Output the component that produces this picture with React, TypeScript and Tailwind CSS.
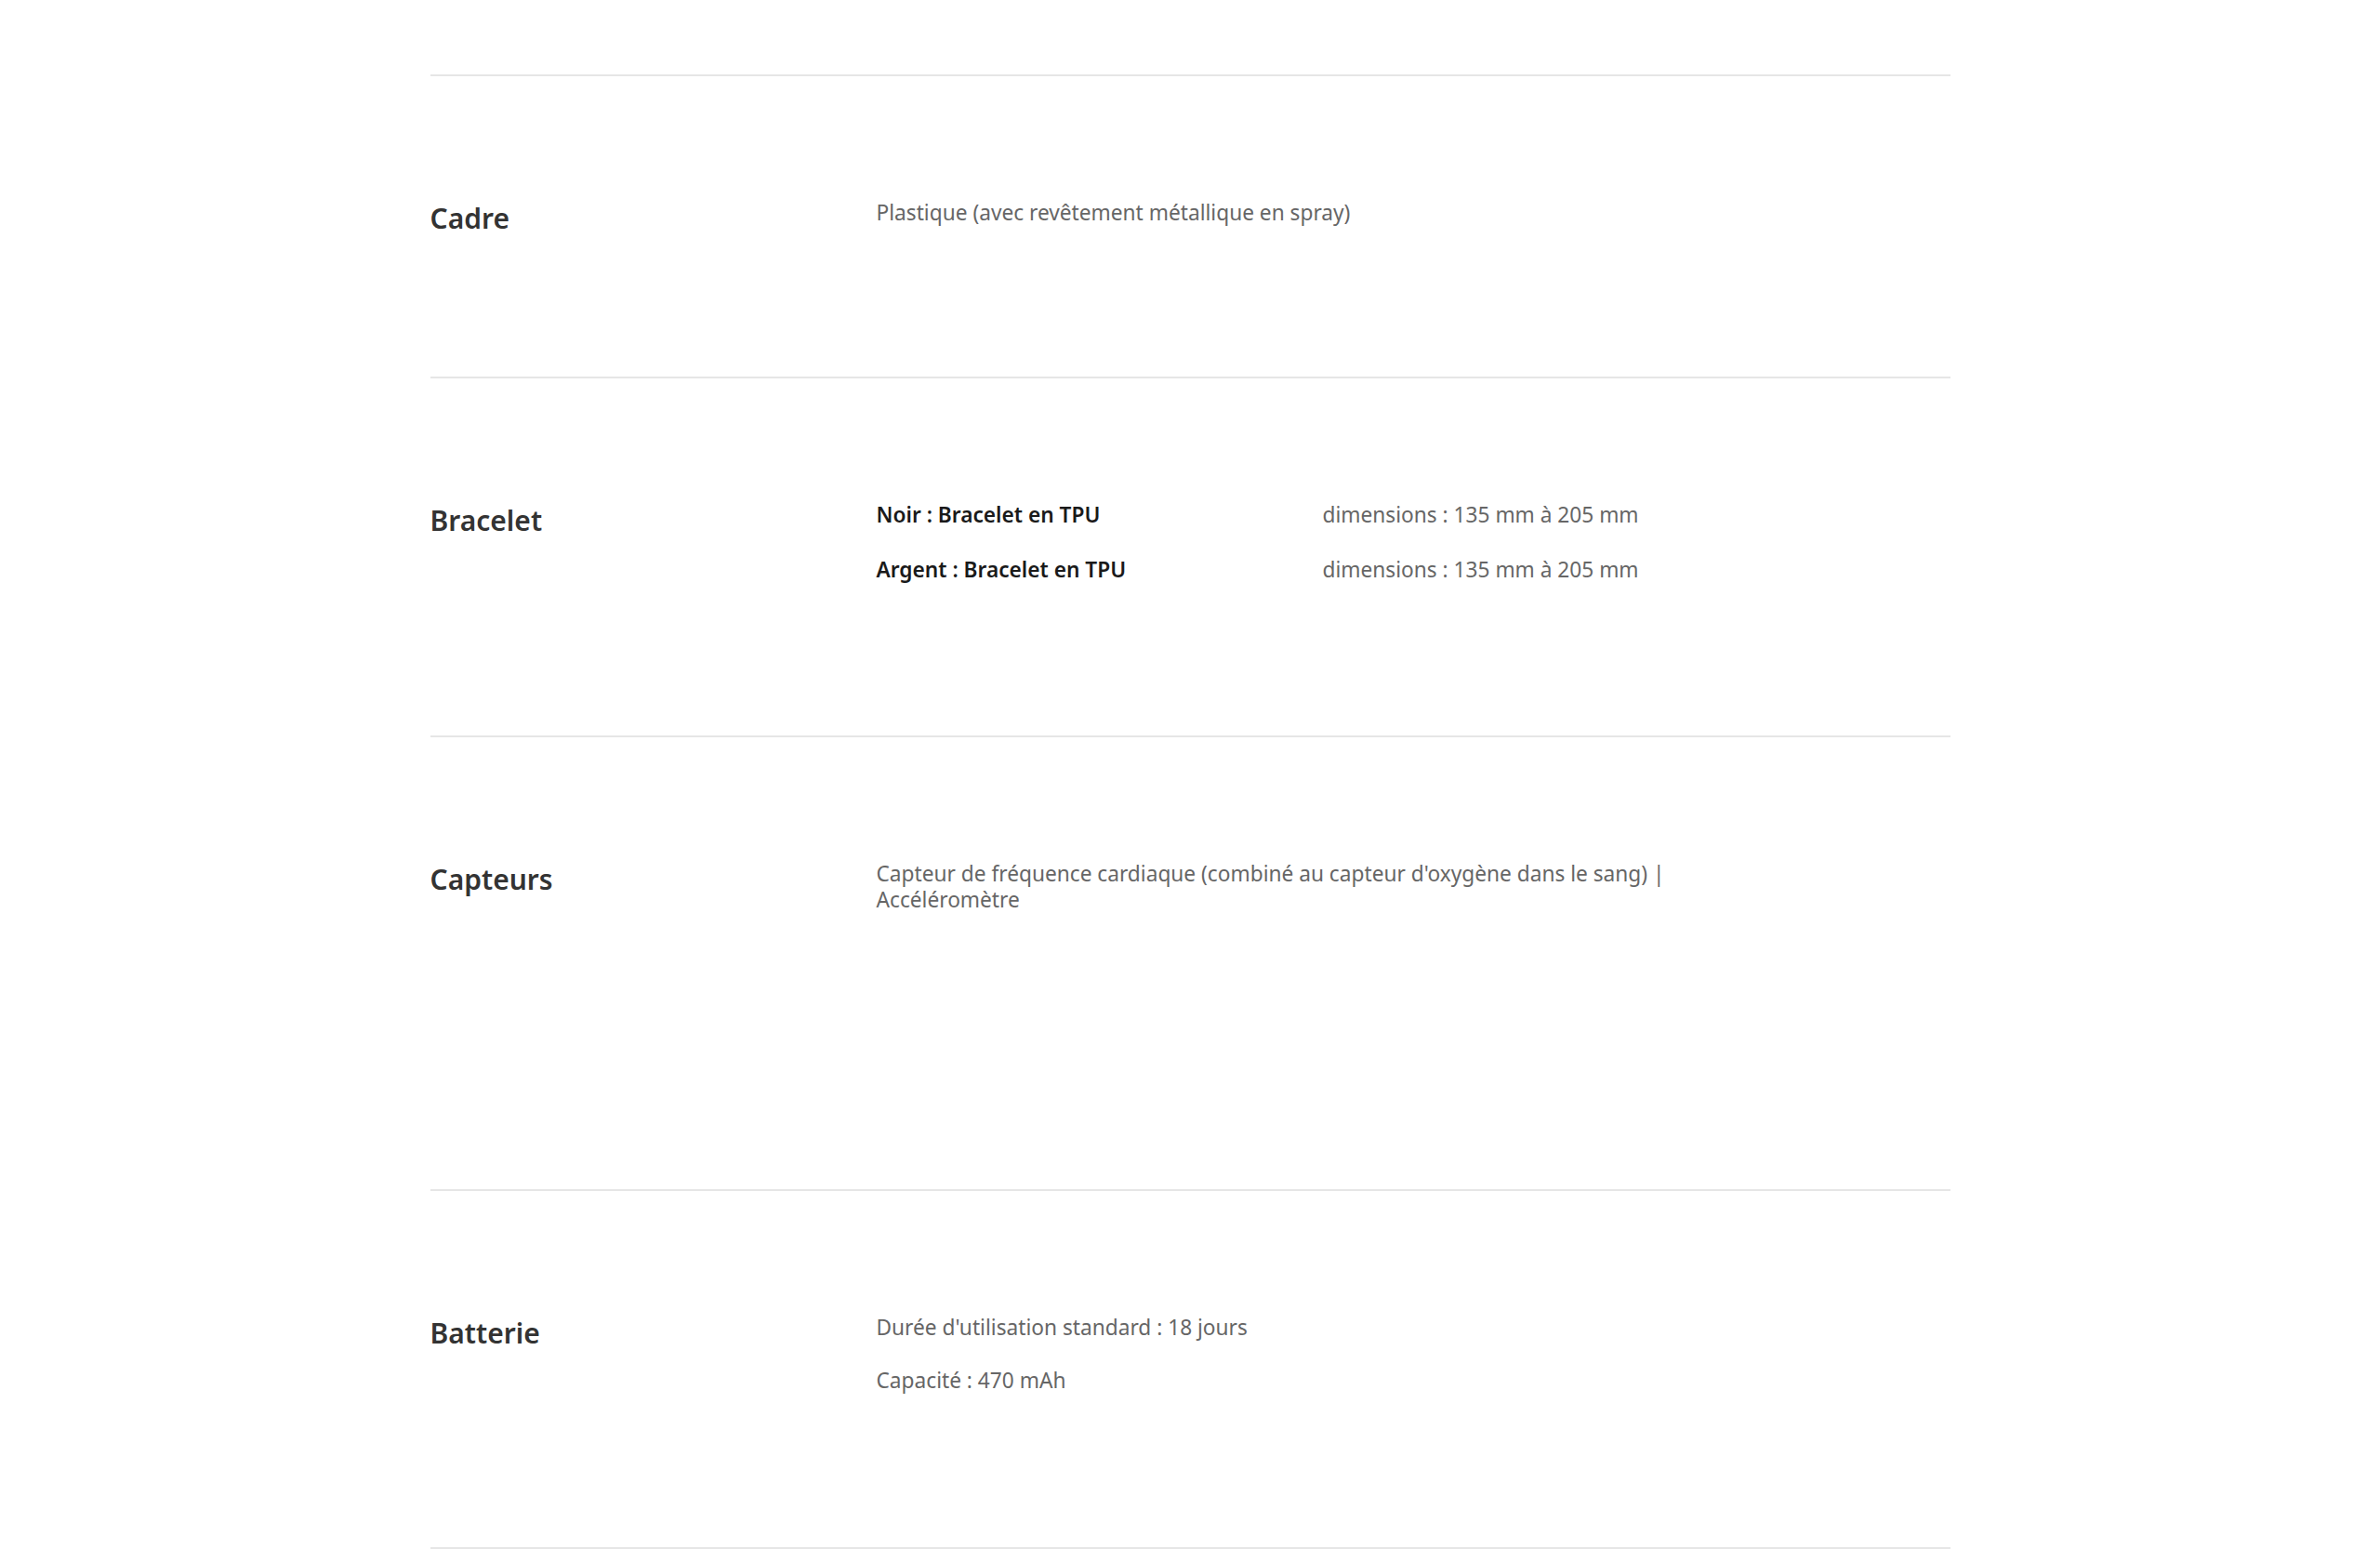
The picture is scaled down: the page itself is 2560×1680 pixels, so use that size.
// Fiche technique : lignes de spécifications (libellé + valeurs)

type Row = { strong?: string; text: string }

type Spec = {
  label: string
  rows: Row[][]
  gap: string
  pb: string
}

const specs: Spec[] = [
  {
    label: "Cadre",
    rows: [[{ text: "Plastique (avec revêtement métallique en spray)" }]],
    gap: "gap-[30px]",
    pb: "pb-[162px]",
  },
  {
    label: "Bracelet",
    rows: [
      [{ strong: "Noir : Bracelet en TPU", text: "" }, { text: "dimensions : 135 mm à 205 mm" }],
      [{ strong: "Argent : Bracelet en TPU", text: "" }, { text: "dimensions : 135 mm à 205 mm" }],
    ],
    gap: "gap-[31px]",
    pb: "pb-[164px]",
  },
  {
    label: "Capteurs",
    rows: [
      [
        {
          text: "Capteur de fréquence cardiaque (combiné au capteur d'oxygène dans le sang) | Accéléromètre",
        },
      ],
    ],
    gap: "gap-[30px]",
    pb: "pb-[297px]",
  },
  {
    label: "Batterie",
    rows: [
      [{ text: "Durée d'utilisation standard : 18 jours" }],
      [{ text: "Capacité : 470 mAh" }],
    ],
    gap: "gap-[29px]",
    pb: "pb-[165px]",
  },
]

function SpecRow({ spec }: { spec: Spec }) {
  return (
    <div className={`flex items-start border-t-2 border-[#e6e6e6] pt-[133px] ${spec.pb}`}>
      <div className="w-[480px] shrink-0 pt-[12px] text-[30px] leading-[16px] font-semibold text-[#333333]">
        {spec.label}
      </div>
      <div className={`flex w-[960px] flex-col ${spec.gap}`}>
        {spec.rows.map((cols, i) => (
          <div key={i} className="flex">
            {cols.map((c, j) =>
              c.strong ? (
                <div
                  key={j}
                  className="w-[480px] shrink-0 text-[22.7px] leading-[28px] font-semibold text-[#1a1a1a]"
                >
                  {c.strong}
                </div>
              ) : (
                <div key={j} className="text-[22.7px] leading-[28px] text-[#666666]">
                  {c.text}
                </div>
              )
            )}
          </div>
        ))}
      </div>
    </div>
  )
}

export default function App() {
  return (
    <div
      className="min-h-screen bg-white pt-[80px]"
      style={{ fontFamily: '"Noto Sans", "Open Sans", sans-serif' }}
    >
      <div className="mx-auto w-[1635px]">
        {specs.map((s) => (
          <SpecRow key={s.label} spec={s} />
        ))}
        <div className="border-t-2 border-[#e6e6e6]" />
      </div>
    </div>
  )
}
